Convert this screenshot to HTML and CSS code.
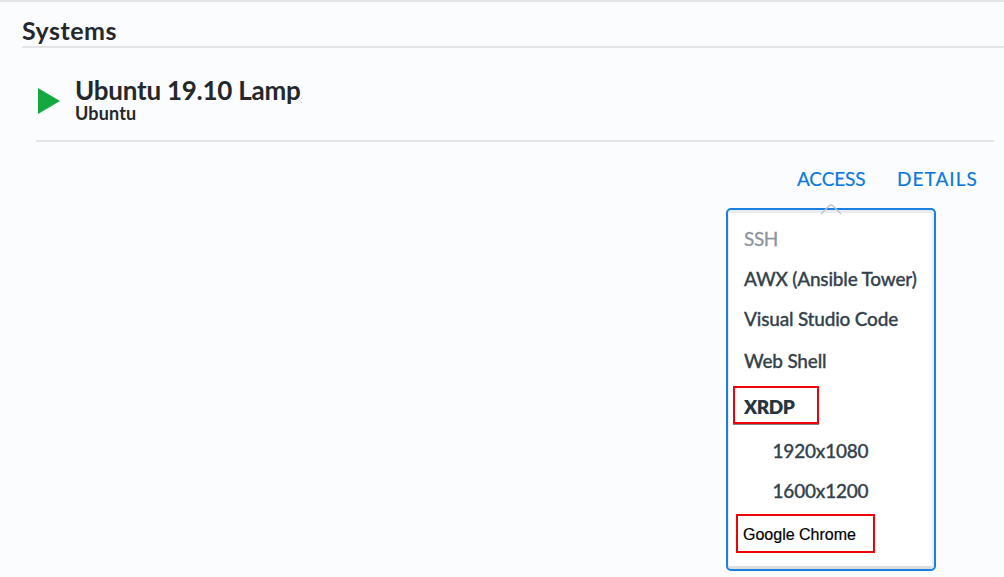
FILE: index.html
```html
<!DOCTYPE html>
<html lang="en">
<head>
<meta charset="utf-8">
<title>Systems</title>
<link rel="stylesheet" href="styles.css">
</head>
<body>
<main class="page">
  <h1 class="heading">Systems</h1>
  <section class="system">
    <svg class="play" viewBox="0 0 22 26" aria-label="Running"><path d="M0 0 22 13 0 26Z"/></svg>
    <div>
      <h2 class="name">Ubuntu 19.10 Lamp<span class="clip"></span></h2>
      <p class="os">Ubuntu</p>
    </div>
  </section>
  <nav class="actions">
    <a class="access">ACCESS</a>
    <a class="details">DETAILS</a>
  </nav>
  <div class="menu">
    <svg class="caret" viewBox="0 0 22 11"><path d="M1 10 9 2Q11 0 13 2L21 10"/></svg>
    <ul class="items">
      <li class="item disabled">SSH</li>
      <li class="item">AWX (Ansible Tower)</li>
      <li class="item">Visual Studio Code</li>
      <li class="item web">Web Shell</li>
      <li class="marked xrdp">XRDP</li>
      <li class="item size">1920x1080</li>
      <li class="item size">1600x1200</li>
      <li class="marked chrome">Google Chrome</li>
    </ul>
  </div>
</main>
</body>
</html>
```
FILE: styles.css
```css
* { box-sizing: border-box; margin: 0; padding: 0; }
body { background: #fbfcfe; font-family: Lato, "Liberation Sans", sans-serif; color: #25282b; }
.page { height: 577px; border-top: 2px solid #e4e5e7; overflow: hidden; }
.heading { height: 46px; margin-left: 22px; padding-top: 13px; border-bottom: 2px solid #e4e5e7; font-size: 25px; line-height: 30px; font-weight: 700; letter-spacing: 0.5px; }
.system { display: flex; height: 94px; margin: 0 10px 0 36px; border-bottom: 2px solid #e4e5e7; }
.play { width: 22px; height: 26px; margin: 40px 15px 0 2px; fill: #14a940; }
.name { padding-top: 27px; font-size: 26px; line-height: 30px; font-weight: 700; letter-spacing: -0.25px; white-space: nowrap; }
.clip { display: inline-block; width: 1px; height: 5px; margin-left: 1px; border-top: 1px solid #bbb; border-bottom: 1px solid #bbb; vertical-align: -3px; }
.os { font-size: 18px; line-height: 18px; font-weight: 700; letter-spacing: 0.15px; margin-top: -1px; }
.actions { display: flex; gap: 32px; height: 66px; padding: 26px 0 0 797px; font-size: 19px; line-height: 22px; color: #0b79dc; white-space: nowrap; -webkit-text-stroke: 0.2px; }
.access { width: 68px; letter-spacing: -0.15px; }
.details { letter-spacing: 1.05px; }
.menu { position: relative; width: 210px; height: 363px; margin-left: 726px; padding-top: 8px; background: #fff; border: 2px solid #1a7fe0; border-radius: 5px; box-shadow: inset 1px 0 #e9edf3, inset -2px 0 #e9edf3, inset 0 3px #ebecef, inset 0 -3px #dcddde; }
.caret { position: absolute; left: 92px; top: -6px; width: 22px; height: 11px; fill: none; stroke: #b9c5d0; stroke-width: 1.4; }
.items { list-style: none; }
.item { display: flex; align-items: center; height: 40px; padding-left: 16px; font-size: 19px; font-weight: 500; letter-spacing: -0.2px; color: #34424c; white-space: nowrap; -webkit-text-stroke: 0.3px; }
.disabled { color: #8c959c; font-weight: 400; letter-spacing: -0.4px; }
.web { height: 43px; padding-top: 1px; }
.size { padding: 0 0 0 44.5px; }
.marked { display: flex; align-items: center; border: 2px solid #f00008; white-space: nowrap; }
.xrdp { width: 86px; height: 38px; margin: 5px 0 6px 5px; padding: 2px 0 0 9px; font-size: 19px; font-weight: 800; letter-spacing: -0.4px; color: #26343e; box-shadow: 0 1px #858585; }
.chrome { width: 139px; height: 39px; margin: 4px 0 0 8px; padding: 2px 0 0 5px; font: 16px "Liberation Sans", Arial, sans-serif; color: #000; -webkit-text-stroke: 0.2px; }
```
